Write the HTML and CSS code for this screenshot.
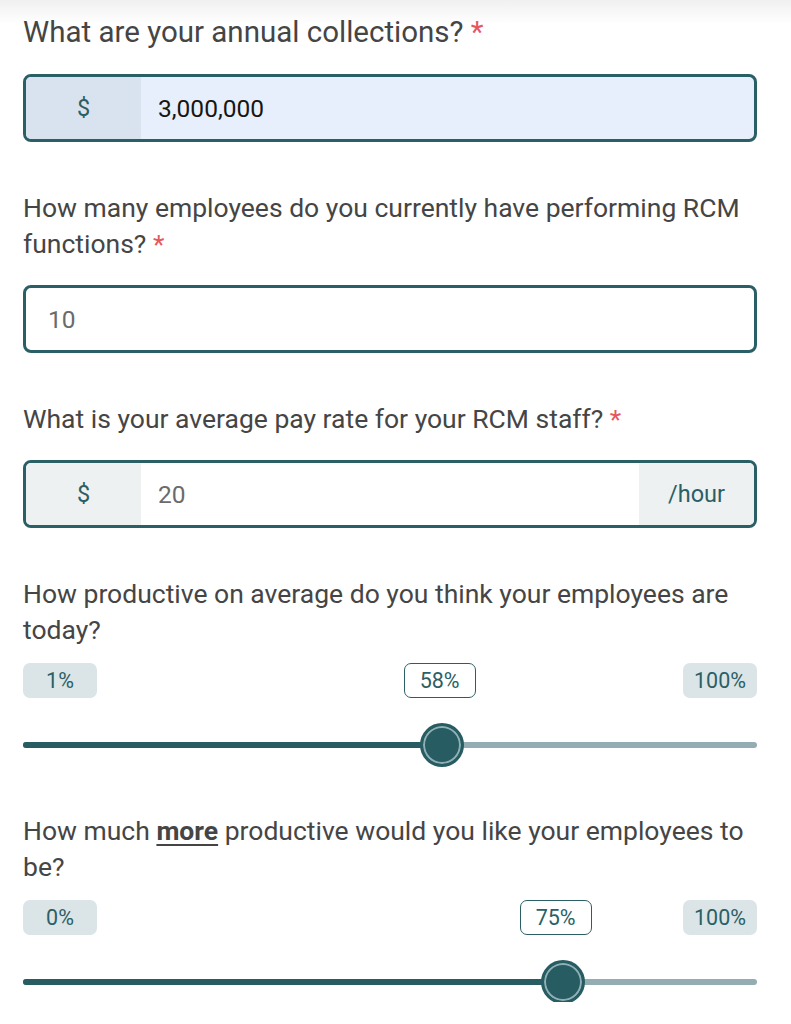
FILE: index.html
```html
<!DOCTYPE html>
<html lang="en">
<head>
  <meta charset="UTF-8">
  <title>RCM Savings Calculator</title>
  <link rel="stylesheet" href="styles.css">
</head>
<body>
  <form class="calc">
    <!-- Annual collections -->
    <div class="question">
      <p class="label label-lead">What are your annual collections? <span class="req">*</span></p>
      <div class="field field-focus">
        <span class="addon">$</span>
        <span class="value value-dark">3,000,000</span>
      </div>
    </div>

    <!-- Employees -->
    <div class="question">
      <p class="label">How many employees do you currently have performing RCM functions? <span class="req">*</span></p>
      <div class="field">
        <span class="value value-plain">10</span>
      </div>
    </div>

    <!-- Pay rate -->
    <div class="question">
      <p class="label">What is your average pay rate for your RCM staff? <span class="req">*</span></p>
      <div class="field">
        <span class="addon addon-light">$</span>
        <span class="value">20</span>
        <span class="addon addon-light addon-end">/hour</span>
      </div>
    </div>

    <!-- Current productivity -->
    <div class="question">
      <p class="label">How productive on average do you think your employees are today?</p>
      <div class="slider">
        <div class="marks">
          <span class="pill">1%</span>
          <span class="pill">100%</span>
          <div class="rail">
            <span class="pill pill-current" style="left: 57.2%">58%</span>
          </div>
        </div>
        <div class="track">
          <div class="fill" style="width: calc(22px + 0.5758 * (100% - 44px))"></div>
          <div class="rail">
            <div class="thumb" style="left: 57.58%"></div>
          </div>
        </div>
      </div>
    </div>

    <!-- Desired improvement -->
    <div class="question">
      <p class="label">How much <b class="em">more</b> productive would you like your employees to be?</p>
      <div class="slider">
        <div class="marks">
          <span class="pill">0%</span>
          <span class="pill">100%</span>
          <div class="rail">
            <span class="pill pill-current" style="left: 74%">75%</span>
          </div>
        </div>
        <div class="track">
          <div class="fill" style="width: calc(22px + 0.75 * (100% - 44px))"></div>
          <div class="rail">
            <div class="thumb" style="left: 75%"></div>
          </div>
        </div>
      </div>
    </div>
  </form>
</body>
</html>
```

FILE: styles.css
```css
* {
  margin: 0;
  padding: 0;
  box-sizing: border-box;
}
body {
  font-family: Roboto, "Liberation Sans", sans-serif;
  background: linear-gradient(#f0f0f0, #ffffff 24px) no-repeat;
  background-color: #fff;
  color: #444;
}
.calc {
  display: flex;
  flex-direction: column;
  gap: 48px;
  padding: 13px 34px 0 23px;
}
.label {
  font-size: 26.5px;
  line-height: 36px;
  color: #454545;
}
.label-lead {
  font-size: 29.5px;
  line-height: 38px;
}
.req {
  color: #e5585c;
}
.em {
  font-weight: 700;
  text-decoration: underline;
  text-underline-offset: 4px;
}
/* Inputs */
.field {
  display: flex;
  align-items: stretch;
  height: 68px;
  margin-top: 23px;
  border: 3px solid #2b5f66;
  border-radius: 8px;
  overflow: hidden;
  background: #fff;
  font-size: 24.5px;
}
.field-focus {
  background: #e8effc;
}
.addon {
  display: flex;
  align-items: center;
  justify-content: center;
  width: 115px;
  background: #d8e3ef;
  color: #2b5f66;
  font-size: 23.5px;
}
.addon-light {
  background: #edf1f2;
}
.addon-end {
  margin-left: auto;
}
.value {
  display: flex;
  align-items: center;
  padding-left: 17px;
  color: #6b6b6b;
}
.value-dark {
  color: #161616;
}
.value-plain {
  padding-left: 22px;
}
/* Sliders */
.slider {
  margin: 15px 0 17px;
}
.marks {
  position: relative;
  display: flex;
  justify-content: space-between;
  height: 35px;
}
.rail {
  position: absolute;
  top: 0;
  bottom: 0;
  left: 22px;
  right: 22px;
}
.pill {
  display: flex;
  align-items: center;
  justify-content: center;
  width: 74px;
  height: 35px;
  border-radius: 7px;
  background: #dbe4e7;
  color: #2b5f66;
  font-size: 21.5px;
}
/* value bubble that follows the thumb */
.pill-current {
  position: absolute;
  top: 0;
  width: 72px;
  margin-left: -36px;
  background: #fff;
  border: 1.5px solid #2b5f66;
}
.track {
  position: relative;
  height: 6px;
  margin-top: 44px;
  background: #93adb2;
  border-radius: 3px;
}
.fill {
  height: 6px;
  border-radius: 3px 0 0 3px;
  background: #275c62;
}
.thumb {
  position: absolute;
  top: 3px;
  width: 44px;
  height: 44px;
  margin: -22px 0 0 -22px;
  border-radius: 50%;
  background: #275c62;
  border: 3px solid #275c62;
  box-shadow: inset 0 0 0 2px #8fb0b5;
}
```
